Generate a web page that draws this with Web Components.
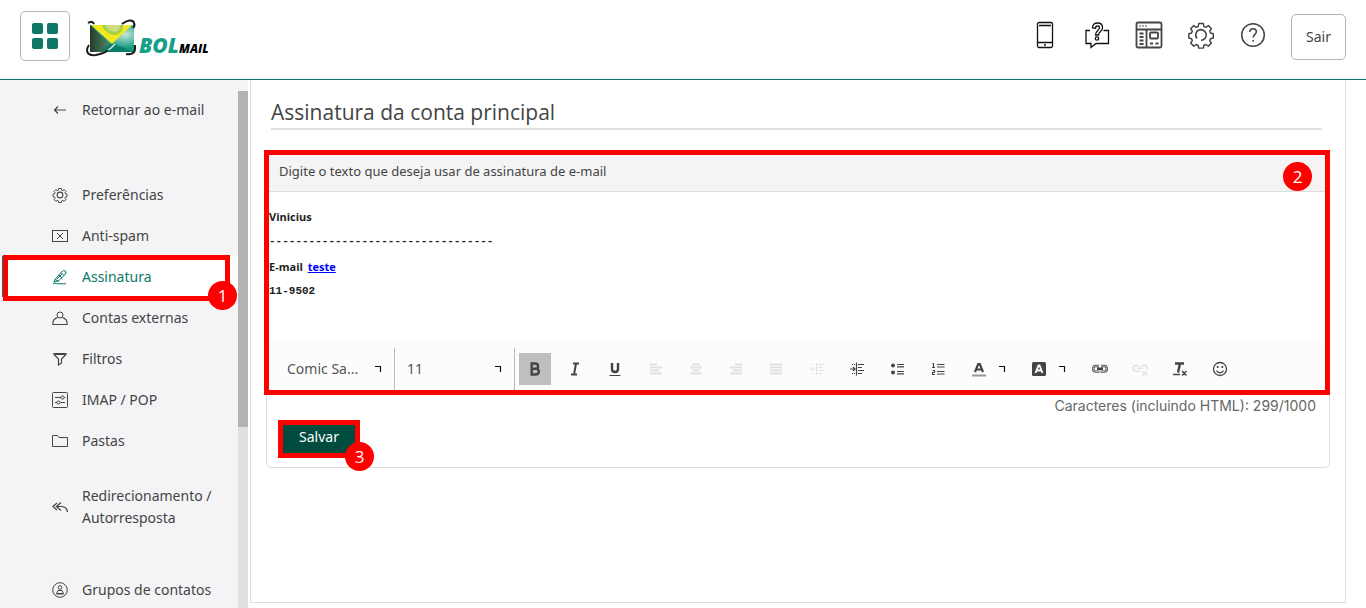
<!DOCTYPE html>
<html lang="pt-BR">
<head>
<meta charset="utf-8">
<title>BOL Mail - Assinatura</title>
<style>
html,body{margin:0;height:100%}
body{font-family:"Noto Sans","Open Sans",sans-serif;font-size:14px;color:#444;background:#fff;overflow:hidden}
</style>
</head>
<body>
<mail-app></mail-app>
<script>
const define = (name, html, init) => {
  const template = document.createElement('template');
  template.innerHTML = html;
  customElements.define(name, class extends HTMLElement {
    constructor() {
      super();
      this.attachShadow({mode: 'open'}).append(template.content.cloneNode(true));
    }
    connectedCallback() { if (init) init(this, this.shadowRoot); }
  });
};

const toolIcon = body => ['0 0 16 16', body];
const icons = {
  apps: ['0 0 26 26', '<g fill="#0d7868" stroke="none"><rect width="11" height="11" rx="2"/><rect x="15" width="11" height="11" rx="2"/><rect y="15" width="11" height="11" rx="2"/><rect x="15" y="15" width="11" height="11" rx="2"/></g>'],
  phone: ['0 0 28 28', '<g stroke="#111" stroke-width="1.3"><rect x="6.5" y="1.5" width="15" height="25" rx="1.5"/><path d="M6.500 21.500h15M8 4.500h12M13 24h2"/></g>'],
  chat: ['0 0 28 28', '<g stroke="#111" stroke-width="1.300"><path d="M7 9.500H3v13h5v4l5-4h12.500v-13h-5"/><path d="M9.500 7c0-3.500 2-5 5-5 3.200 0 5 2 5 4.700 0 4-4 3.600-4 7.300h-3c0-4.500 4-4.800 4-7.200 0-1-.800-1.800-2-1.800s-2 .800-2 2.200z"/><circle cx="14" cy="17.500" r="1.700"/></g>'],
  page: ['0 0 28 28', '<g stroke="#444" stroke-width="1.800"><rect x="1.500" y="1.500" width="25" height="25" rx="1.500"/><path d="M1.500 8.500h25M11.500 8.500v18"/><rect x="15" y="11.500" width="8" height="6" rx="1"/><path d="M4.500 12.500h4M4.500 16h4M4.500 19.500h4M4.500 23h4M15 22.500h3M20.500 22.500h3"/><path stroke-dasharray="1 2" d="M4.500 5h8"/></g>'],
  gear: ['0 0 28 28', '<g stroke="#444" stroke-width="1.600" stroke-linejoin="round"><path d="M11.500 1.500h5l.7 3.300 2 .8 2.900-1.900 3.300 3.500-1.800 2.700.8 2 3.100.7v4.800l-3.100.7-.8 2 1.800 2.800-3.400 3.400-2.800-1.800-2 .8-.7 3.200h-5l-.7-3.200-2-.8L6 26.300l-3.400-3.400 1.800-2.800-.8-2-3-.7v-4.800l3-.7.8-2-1.800-2.700L6 3.700l2.800 1.900 2-.8z" transform="translate(1.300 1.200) scale(.91)"/><path d="M10 17.500a5.300 5.300 0 1 1 4 1.800"/></g>'],
  help: ['0 0 28 28', '<g stroke="#444" stroke-width="1.500"><circle cx="14" cy="14" r="11.300"/><path d="M10.800 11c0-2.300 1.500-3.300 3.300-3.300s3.300 1.100 3.300 3.100c0 2.600-3.200 2.700-3.200 5.700M14.200 19v1.800"/></g>'],
  arrow: toolIcon('<path d="M14 8H2.500M6 4.500L2.500 8 6 11.500" stroke-width="1.200"/>'),
  cog: ['0 0 28 28', '<g stroke-width="1.900" stroke-linejoin="round"><path d="M11.500 1.500h5l.7 3.300 2 .8 2.900-1.900 3.300 3.500-1.800 2.700.8 2 3.100.7v4.800l-3.100.7-.8 2 1.800 2.800-3.400 3.400-2.800-1.800-2 .8-.7 3.200h-5l-.7-3.200-2-.8L6 26.300l-3.400-3.400 1.800-2.800-.8-2-3-.7v-4.800l3-.7.8-2-1.800-2.700L6 3.700l2.800 1.900 2-.8z" transform="translate(1.300 1.200) scale(.91)"/><circle cx="14" cy="14" r="5"/></g>'],
  spam: toolIcon('<rect x=".5" y="2.500" width="15" height="11"/><path d="M5 5l6 6M11 5l-6 6"/>'),
  pen: toolIcon('<path d="M3 10.500L9 3.500l2.500-2 2 .5.500 2-2 2.500-5.500 5.500-4.500 1zM3 10.500l3.500 1.500M9 3.500L12 6.500M7 6l3 3M5 10l5-5M1 14.500c3-1 3 .8 6 .3h7"/>'),
  user: toolIcon('<circle cx="8" cy="5" r="3"/><path d="M5.500 7.500C3 8.500 1 10 1 12.500v2h14v-2c0-2.500-2-4-4.500-5" stroke-width="1.200"/>'),
  filter: toolIcon('<path d="M2 2.500h12v1L9.500 8v4l-3 2V8L2 3.500zM3 3.500h10" stroke-width="1.200"/>'),
  sliders: toolIcon('<rect x=".5" y=".5" width="15" height="15" rx="1"/><path d="M3 5.500h6M12.500 5.500h1M3 10.500h2M8.500 10.500H13"/><circle cx="10.500" cy="5.500" r="1.600"/><circle cx="6.500" cy="10.500" r="1.600"/>'),
  folder: toolIcon('<path d="M.5 13.500v-11h5l1.500 2h8.500v9z"/>'),
  reply: toolIcon('<path d="M5 4L1 7.500 5 11M9 3.500L4.500 7.500 9 11.500M5 7.500h4c3.500 0 6 1.500 6.500 5.500" stroke-width="1.200"/>'),
  group: toolIcon('<circle cx="8" cy="8" r="7.300"/><circle cx="8" cy="5.500" r="1.800"/><path d="M6 8.500h4l1.500 3h-7zM4.500 12h7"/>'),
  bold: toolIcon('<path d="M4.700 2.500v11h4c4 0 4-5 .8-5.800 2.500-1 2-5.200-1.200-5.200zM6 7.800h3" stroke-width="2.400"/>'),
  italic: toolIcon('<path d="M6 2.500h6M4 13.500h6M9 2.500L7 13.500" stroke-width="2"/>'),
  underline: toolIcon('<path d="M5 2v6c0 4 6 4 6 0V2" stroke-width="2.400"/><path d="M2.500 14.500h11"/>'),
  left: toolIcon('<path d="M2 3.500h7M2 6.500h12M2 9.500h9M2 12.500h12" stroke-width="1.800"/>'),
  center: toolIcon('<path d="M4 3.500h8M2 6.500h12M4 9.500h8M2 12.500h12" stroke-width="1.800"/>'),
  right: toolIcon('<path d="M7 3.500h7M2 6.500h12M5 9.500h9M2 12.500h12" stroke-width="1.800"/>'),
  justify: toolIcon('<path d="M2 3.500h12M2 6.500h12M2 9.500h12M2 12.500h12" stroke-width="1.800"/>'),
  outdent: toolIcon('<path d="M7.500 1.500v13M9 3.500h6M9 6.500h4M9 9.500h6M9 12.500h4M1.500 8H6M3.500 6l-2 2 2 2M3 3.500h1M5 3.500h1M3 12.500h1M5 12.500h1"/>'),
  indent: toolIcon('<path d="M7.500 1.500v13M9 3.500h6M9 6.500h4M9 9.500h6M9 12.500h4M1 8h5M4 6l2 2-2 2M3 3.500h1M5 3.500h1M3 12.500h1M5 12.500h1" stroke-width="1.200"/>'),
  bullets: toolIcon('<circle cx="3" cy="4.500" r="2" fill="currentColor" stroke="none"/><circle cx="3" cy="11.500" r="2" fill="currentColor" stroke="none"/><path d="M7 3.500h7M7 5.800h7M7 10.500h7M7 12.800h7" stroke-width="1.200"/>'),
  numbers: toolIcon('<path d="M7 3.500h7.500M7 6h7.500M7 10.500h7.500M7 13h7.500M2.500 2.500h1v4M2 6.500h3M2.500 9.500h2v2h-2v2h2.500" stroke-width="1.200"/>'),
  color: toolIcon('<path d="M4 11L7.200 3h1.600L12 11M5.500 8.500h5" stroke-width="2.200"/><path d="M1 14.500h14" stroke="#999" stroke-width="2"/>'),
  fill: toolIcon('<rect x="1" y="1" width="14" height="14" rx="1.500" fill="currentColor" stroke="none"/><path d="M4.500 12L7.500 4.500h1L11.500 12M6 9.500h4" stroke="#fff" stroke-width="1.800"/>'),
  link: toolIcon('<path d="M7 5H4a2.800 2.800 0 0 0 0 5.600h3.500M9 5h3a2.800 2.800 0 0 1 0 5.600H8.500M5 7.800h6" stroke-width="2.400"/><path d="M7 5H4a2.800 2.800 0 0 0 0 5.600h3.500M9 5h3a2.800 2.800 0 0 1 0 5.600H8.500" stroke="#fcfcfc" stroke-width=".7"/>'),
  unlink: toolIcon('<path d="M7 4.500H4A2.500 2.500 0 0 0 4 10h4M9 4.500h3a2.500 2.500 0 0 1 2.500 4M5 7.200h6M10 10l5 5M15 10l-5 5" stroke-width="1.600"/>'),
  clear: toolIcon('<path d="M3 2.500h9M8 2.500l-2 9" stroke-width="2.400"/><path d="M1 13.500h7M10 10l4.500 4.500M14.500 10L10 14.500" stroke-width="1.500"/>'),
  smile: toolIcon('<circle cx="8" cy="8" r="6.500" stroke-width="1.300"/><circle cx="5.700" cy="6" r="1.100" fill="currentColor" stroke="none"/><circle cx="10.300" cy="6" r="1.100" fill="currentColor" stroke="none"/><path d="M4.500 9.500c1.500 3 5.500 3 7 0" stroke-width="1.300"/>'),
  corner: ['0 0 8 8', '<path d="M1 1.500h5.500V7" stroke="#111" stroke-width="1.200"/>']
};

define('ui-icon', `<style>
:host{display:block;flex:none;width:var(--size,16px);height:var(--size,16px)}
svg{display:block;width:100%;height:100%;fill:none;stroke:currentColor;stroke-width:1}
</style><svg aria-hidden="true"></svg>`, (host, root) => {
  const [box, body] = icons[host.getAttribute('name')];
  const svg = root.querySelector('svg');
  svg.setAttribute('viewBox', box);
  svg.innerHTML = body;
});

define('step-outline', `<style>
:host{position:absolute;box-sizing:border-box;border:5px solid #f00;pointer-events:none;z-index:2}
span{position:absolute;right:var(--badge-right,-12px);top:var(--badge-top,auto);bottom:var(--badge-bottom,-14px);width:29px;height:29px;border-radius:50%;background:#f00;color:#fff;font:17px/29px "Open Sans",sans-serif;text-align:center}
</style><span><slot></slot></span>`);

define('bol-logo', `<style>
:host{display:flex;width:124px;height:40px}
svg{width:124px;height:40px;overflow:visible}
text{font-family:"Open Sans",sans-serif;font-weight:800;font-style:italic}
</style><svg viewBox="0 0 124 40" role="img" aria-label="BOL Mail">
<defs><radialGradient id="g" cx=".8" cy=".35" r=".5"><stop stop-color="#c4e6d9"/><stop offset="1" stop-color="#159a80"/></radialGradient><linearGradient id="d"><stop stop-color="#243b2d"/><stop offset="1" stop-color="#4c8b67"/></linearGradient></defs>
<path d="M4 7h44v27H4z" fill="url(#g)"/><path d="M4 7l20 19-9 8H4z" fill="url(#d)"/><path d="M14 34l11-9 5 2 18 7z" fill="#087d68"/>
<path d="M5 7h41L26 26z" fill="#f3e81f"/><path d="M16 7h21c1 8-7 12-13 9-4-2-7-5-8-9z" fill="#a9cf45"/><path d="M20 7h14c0 7-5 8-9 6-3-1-5-3-5-6z" fill="#c7de83"/>
<path d="M29 26c-5 6-12 10-21 11" fill="none" stroke="#bfe5db" stroke-width="1.500"/>
<path d="M2 5c3-2 5-1 6 1M36 6c5-4 11-5 12-1 1 2 0 4-1 5M3 27c-4 6-2 11 7 10 5-1 9-2 12-5M40 36c5 1 9-1 9-5v-4" fill="none" stroke="#1c1c1c" stroke-width="2"/>
<text x="53" y="35" font-size="21" fill="#16a085">BOL</text><text x="93" y="35" font-size="12" fill="#000">MAIL</text></svg>`);

define('app-header', `<style>
:host{display:flex;align-items:center;flex:none;box-sizing:border-box;height:80px;padding:0 20px 8px;border-bottom:1px solid #0d7868;background:#fff}
button{font:inherit;color:inherit;background:none;border:0;padding:0}
.apps{display:grid;place-items:center;width:50px;height:50px;border:1px solid #b5b5b5;border-radius:5px;--size:26px}
bol-logo{margin:4px auto 0 16px}
nav{display:flex;gap:24px;align-items:center;margin-bottom:2px;--size:28px}
.out{height:46px;width:55px;margin-top:4px;border:1px solid #b5b5b5;border-radius:5px;font-size:14px}
</style>
<button class="apps" aria-label="Aplicativos"><ui-icon name="apps"></ui-icon></button>
<bol-logo></bol-logo>
<nav aria-label="Atalhos"><button aria-label="Celular"><ui-icon name="phone"></ui-icon></button><button aria-label="Sugestões"><ui-icon name="chat"></ui-icon></button><button aria-label="Portal"><ui-icon name="page"></ui-icon></button><button aria-label="Configurações"><ui-icon name="gear"></ui-icon></button><button aria-label="Ajuda"><ui-icon name="help"></ui-icon></button><button class="out">Sair</button></nav>`);

define('nav-item', `<style>
:host{display:block;position:relative;flex:none}
a{display:flex;align-items:center;gap:14px;box-sizing:border-box;min-height:41px;padding-left:52px;color:inherit;text-decoration:none;font-size:14px;line-height:22px}
:host([current]) a{color:#0d7868;background:#fff;margin-left:2px;padding-left:48px;border-left:2px solid #0d7868}
:host([double]) a{min-height:92px}
</style><a href="#"><span><slot></slot></span></a><slot name="mark"></slot>`, (host, root) => {
  const link = root.querySelector('a');
  const icon = document.createElement('ui-icon');
  icon.setAttribute('name', host.getAttribute('icon'));
  link.prepend(icon);
  if (host.hasAttribute('current')) link.setAttribute('aria-current', 'page');
});

define('side-menu', `<style>
:host{display:flex;width:248px;flex:none;background:#f4f4f6}
nav{display:flex;flex-direction:column;flex:1;min-width:0;padding-top:9px}
.back{margin-bottom:44px}
.last{margin-top:16px}
.track{width:10px;margin-top:11px;background:#e0e0e0}
.thumb{height:65%;background:#b3b3b3}
step-outline{left:3px;right:8px;top:-1px;bottom:-4px;--badge-bottom:-14px}
</style><nav aria-label="Configurações">
<nav-item class="back" icon="arrow">Retornar ao e-mail</nav-item>
<nav-item icon="cog">Preferências</nav-item>
<nav-item icon="spam">Anti-spam</nav-item>
<nav-item icon="pen" current>Assinatura<step-outline slot="mark">1</step-outline></nav-item>
<nav-item icon="user">Contas externas</nav-item>
<nav-item icon="filter">Filtros</nav-item>
<nav-item icon="sliders">IMAP / POP</nav-item>
<nav-item icon="folder">Pastas</nav-item>
<nav-item icon="reply" double>Redirecionamento /<br>Autorresposta</nav-item>
<nav-item class="last" icon="group">Grupos de contatos</nav-item>
</nav><div class="track"><div class="thumb"></div></div>`);

define('editor-toolbar', `<style>
:host{display:flex;align-items:center;box-sizing:border-box;height:48px;background:#fcfcfc;padding-top:6px}
label{display:flex;align-items:center;box-sizing:border-box;height:42px;border-right:1px solid #bbb;padding:0 12px;--size:8px}
label.font{width:126px;padding-left:18px}
label.size{width:120px}
select{appearance:none;flex:1;min-width:0;border:0;padding:0;background:none;color:#555;font:14px/20px "Noto Sans",sans-serif}
.group{display:flex;gap:8px;margin-left:9px}
.group.first{margin-left:4px}
button{display:grid;grid-auto-flow:column;place-items:center;width:32px;height:32px;border:0;padding:0;background:none;color:#444}
button[aria-pressed=true]{background:#bfbfbf}
button:disabled{color:#e2e2e2}
button.menu{width:52px;grid-template-columns:32px 14px;justify-content:start}
.menu ui-icon+ui-icon{--size:8px}
</style>
<label class="font"><select aria-label="Fonte"><option>Comic Sa...</option></select><ui-icon name="corner"></ui-icon></label>
<label class="size"><select aria-label="Tamanho"><option>11</option></select><ui-icon name="corner"></ui-icon></label>
<div class="group first"><button aria-label="Negrito" aria-pressed="true"><ui-icon name="bold"></ui-icon></button><button aria-label="Itálico"><ui-icon name="italic"></ui-icon></button><button aria-label="Sublinhado"><ui-icon name="underline"></ui-icon></button></div>
<div class="group"><button disabled aria-label="Esquerda"><ui-icon name="left"></ui-icon></button><button disabled aria-label="Centro"><ui-icon name="center"></ui-icon></button><button disabled aria-label="Direita"><ui-icon name="right"></ui-icon></button><button disabled aria-label="Justificar"><ui-icon name="justify"></ui-icon></button></div>
<div class="group"><button disabled aria-label="Diminuir recuo"><ui-icon name="outdent"></ui-icon></button><button aria-label="Aumentar recuo"><ui-icon name="indent"></ui-icon></button></div>
<div class="group"><button aria-label="Marcadores"><ui-icon name="bullets"></ui-icon></button><button aria-label="Numeração"><ui-icon name="numbers"></ui-icon></button></div>
<div class="group"><button class="menu" aria-label="Cor do texto"><ui-icon name="color"></ui-icon><ui-icon name="corner"></ui-icon></button><button class="menu" aria-label="Cor de fundo"><ui-icon name="fill"></ui-icon><ui-icon name="corner"></ui-icon></button></div>
<div class="group"><button aria-label="Link"><ui-icon name="link"></ui-icon></button><button disabled aria-label="Remover link"><ui-icon name="unlink"></ui-icon></button><button aria-label="Limpar formatação"><ui-icon name="clear"></ui-icon></button><button aria-label="Emoji"><ui-icon name="smile"></ui-icon></button></div>`);

define('signature-editor', `<style>
:host{display:block;position:relative}
header{box-sizing:border-box;height:37px;padding:0 10px 3px;border-bottom:1px solid #ddd;background:#f4f4f4;font-size:13px;line-height:33px}
.text{box-sizing:border-box;height:150px;padding-top:12px;color:#222;font:bold 11px/25px "Open Sans",sans-serif}
p{margin:0}
.mono{font-family:"Liberation Mono",monospace}
a{color:#00f;margin-left:2px}
step-outline{inset:-5px;--badge-right:13px;--badge-top:7px;--badge-bottom:auto}
</style><header>Digite o texto que deseja usar de assinatura de e-mail</header>
<div class="text"><p>Vinicius</p><p class="mono">----------------------------------</p><p>E-mail <a href="#">teste</a></p><p class="mono">11-9502</p></div>
<editor-toolbar></editor-toolbar><step-outline>2</step-outline>`);

define('signature-page', `<style>
:host{display:block;flex:1;min-width:0;box-sizing:border-box;margin:0 20px 5px 2px;border:solid #ddd;border-width:0 1px 1px;padding:17px 15px 0}
h1{margin:0 8px 24px 5px;padding-bottom:1px;border-bottom:2px solid #e2e2e2;font-family:"Open Sans",sans-serif;font-size:21px;line-height:30px;font-weight:400}
.card{border:1px solid #ddd;border-radius:5px;padding:0 4px 14px 2px}
.count{margin:4px 9px 0;text-align:right;color:#666;font-family:Inter,sans-serif;font-size:14px;line-height:24px}
.save{position:relative;display:inline-block;margin:7px 0 0 14px;vertical-align:top}
button{display:block;width:72px;height:28px;border:0;padding:0 0 4px;background:#004d40;color:#fff;font:14px/20px "Noto Sans",sans-serif}
step-outline{inset:-5px;--badge-right:-19px;--badge-bottom:-18px}
</style><h1>Assinatura da conta principal</h1>
<section class="card"><signature-editor></signature-editor>
<p class="count">Caracteres (incluindo HTML): 299/1000</p>
<div class="save"><button>Salvar</button><step-outline>3</step-outline></div></section>`);

define('mail-app', `<style>
:host{display:flex;flex-direction:column;height:100vh;overflow:hidden}
main{display:flex;flex:1;min-height:0}
</style><app-header></app-header><main><side-menu></side-menu><signature-page></signature-page></main>`);
</script>
</body>
</html>
